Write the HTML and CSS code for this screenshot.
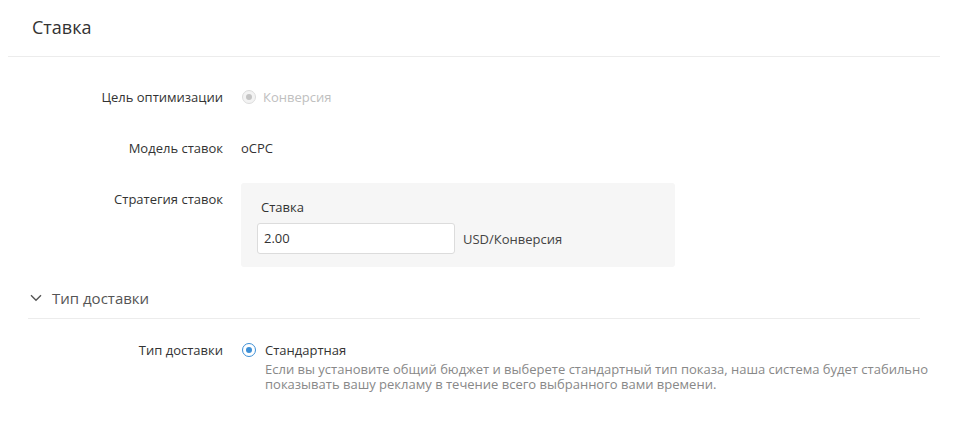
FILE: index.html
```html
<!DOCTYPE html>
<html lang="ru">
<head>
<meta charset="utf-8">
<link rel="stylesheet" href="styles.css">
</head>
<body>
<div class="card">
  <div class="card-head">
    <h2 class="title">Ставка</h2>
  </div>
  <div class="form">
    <div class="row row-opt">
      <div class="label">Цель оптимизации</div>
      <div class="control">
        <label class="radio disabled"><span class="dot"></span><span class="radio-text">Конверсия</span></label>
      </div>
    </div>
    <div class="row row-model">
      <div class="label">Модель ставок</div>
      <div class="control"><span class="value">oCPC</span></div>
    </div>
    <div class="row row-strategy">
      <div class="label">Стратегия ставок</div>
      <div class="control">
        <div class="bidbox">
          <div class="bid-title">Ставка</div>
          <div class="bid-line">
            <div class="input">2.00</div>
            <span class="unit">USD/Конверсия</span>
          </div>
        </div>
      </div>
    </div>
  </div>
  <div class="section">
    <div class="section-head">
      <svg class="chev" width="12" height="8" viewBox="0 0 12 8"><path d="M1 1.2 L6 6.2 L11 1.2" fill="none" stroke="#555" stroke-width="1.4"/></svg>
      <span class="section-title">Тип доставки</span>
    </div>
  </div>
  <div class="form">
    <div class="row row-delivery">
      <div class="label">Тип доставки</div>
      <div class="control">
        <label class="radio checked"><span class="dot"></span><span class="radio-text">Стандартная</span></label>
        <p class="desc">Если вы установите общий бюджет и выберете стандартный тип показа, наша система будет стабильно показывать вашу рекламу в течение всего выбранного вами времени.</p>
      </div>
    </div>
  </div>
</div>
</body>
</html>
```
FILE: styles.css
```css
* { box-sizing: border-box; }
html, body { margin: 0; padding: 0; background: #fff; }
body {
  font-family: "Open Sans", "Noto Sans", sans-serif;
  color: #333;
  font-size: 13px;
}
.card {
  margin-left: 8px;
  width: 932px;
}
.card-head {
  height: 57px;
  border-bottom: 1px solid #ececec;
  padding-left: 24px;
  padding-top: 14px;
}
.title {
  margin: 0;
  font-size: 18px;
  font-weight: 400;
  color: #333;
  line-height: 26px;
}
.form { display: flex; flex-direction: column; }
.row { display: flex; align-items: flex-start; }
.label {
  width: 215px;
  flex: none;
  text-align: right;
  color: #333;
  line-height: 18px;
}
.control { margin-left: 18px; flex: 1; }
.row-opt { margin-top: 31px; }
.row-model { margin-top: 33px; }
.row-strategy { margin-top: 33px; }
.row-delivery { margin-top: 22px; }
.value { line-height: 18px; color: #333; }
.radio { display: flex; align-items: center; height: 18px; }
.dot {
  width: 14px; height: 14px; border-radius: 50%;
  border: 1px solid #d9d9d9; position: relative; flex: none;
  margin-left: 1px;
}
.dot::after {
  content: ""; position: absolute; left: 3px; top: 3px;
  width: 6px; height: 6px; border-radius: 50%;
}
.radio.disabled .dot { background: #f3f3f3; border-color: #dcdcdc; }
.radio.disabled .dot::after { background: #c4c4c4; }
.radio.disabled .radio-text { color: #c0c0c0; margin-left: 7px; }
.radio.checked .dot { border-color: #3d8fd6; background: #fff; }
.radio.checked .dot::after { background: #3d8fd6; }
.radio.checked .radio-text { color: #333; margin-left: 9px; }
.bidbox {
  width: 434px;
  background: #f6f6f6;
  border-radius: 3px;
  margin-top: -7px;
  padding: 15px 16px 13px 16px;
}
.bid-title { line-height: 18px; margin-left: 4px; color: #333; }
.bid-line { display: flex; align-items: center; margin-top: 7px; }
.input {
  width: 198px; height: 31px;
  background: #fff; border: 1px solid #dcdcdc; border-radius: 3px;
  padding: 0 6px; line-height: 29px; color: #333;
}
.unit { margin-left: 8px; color: #444; }
.section { padding: 0 20px; margin-top: 13px; }
.section-head {
  display: flex; align-items: center;
  height: 39px;
  border-bottom: 1px solid #ececec;
  padding-bottom: 2px;
}
.chev { margin-left: 2px; }
.section-title { margin-left: 10px; font-size: 15px; color: #555; }
.desc {
  margin: 3px 0 0 24px;
  color: #888;
  line-height: 15px;
  font-size: 13px;
  max-width: 680px;
}
```
